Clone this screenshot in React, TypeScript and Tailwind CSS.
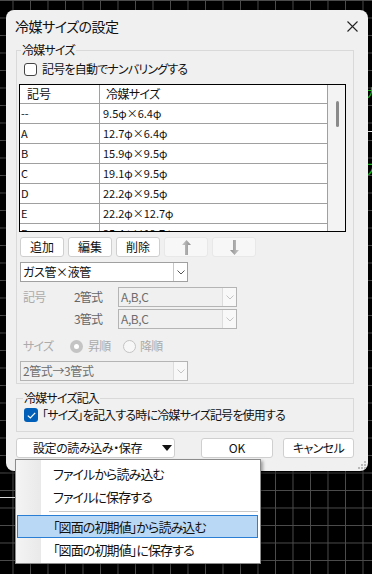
import type { ReactNode } from "react";

const FONT = "font-['Noto_Sans_CJK_JP',sans-serif] [font-feature-settings:'palt']";

const rows: [string, string][] = [
  ["--", "9.5φ×6.4φ"],
  ["A", "12.7φ×6.4φ"],
  ["B", "15.9φ×9.5φ"],
  ["C", "19.1φ×9.5φ"],
  ["D", "22.2φ×9.5φ"],
  ["E", "22.2φ×12.7φ"],
  ["F", "25.4φ×12.7φ"],
];

function Chevron({ color }: { color: string }) {
  return (
    <svg width="8" height="5" viewBox="0 0 8 5">
      <polyline points="0.5,0.5 4,4 7.5,0.5" fill="none" stroke={color} strokeWidth="1" />
    </svg>
  );
}

function Combo({
  label,
  disabled,
  className,
}: {
  label: string;
  disabled?: boolean;
  className: string;
}) {
  return (
    <div
      className={
        "flex h-[20px] border " +
        (disabled ? "border-[#b4b4b4] bg-[#f0f0f0] text-[#6d6d6d] " : "border-[#a0a0a0] bg-white text-[#111] ") +
        className
      }
    >
      <div className="flex flex-1 items-center pl-[2px] text-[12px] leading-none tracking-[-0.4px]">{label}</div>
      <div
        className={
          "flex w-[14px] items-center justify-center border-l " +
          (disabled ? "border-[#dcdcdc] bg-[#f8f8f8]" : "border-[#c8c8c8] bg-white")
        }
      >
        <Chevron color={disabled ? "#c4c4c4" : "#555"} />
      </div>
    </div>
  );
}

function Button({
  children,
  disabled,
  className,
}: {
  children: ReactNode;
  disabled?: boolean;
  className: string;
}) {
  return (
    <button
      type="button"
      className={
        "flex h-[20px] items-center justify-center rounded-[3px] border text-[12px] leading-none " +
        (disabled ? "border-[#e8e8e8] bg-[#f7f7f7]" : "border-[#cfcfcf] bg-white text-[#111]") +
        " " +
        className
      }
    >
      {children}
    </button>
  );
}

function Arrow({ down }: { down?: boolean }) {
  return (
    <svg width="9" height="15" viewBox="0 0 9 15" className={down ? "rotate-180" : ""}>
      <defs>
        <linearGradient id={down ? "ad" : "au"} x1="0" x2="1">
          <stop offset="0" stopColor="#c8c8c8" />
          <stop offset="1" stopColor="#8e8e8e" />
        </linearGradient>
      </defs>
      <path d="M4.5 0 L9 5 L6 5 L6 15 L3 15 L3 5 L0 5 Z" fill={`url(#${down ? "ad" : "au"})`} />
    </svg>
  );
}

export default function App() {
  return (
    <div
      className={
        "relative h-[574px] w-[372px] overflow-hidden bg-black bg-[linear-gradient(to_right,#4c4c4c_1px,transparent_1px),linear-gradient(to_bottom,#4c4c4c_1px,transparent_1px)] bg-[size:17.5px_17.5px] bg-[position:12.5px_0px] pl-[6px] pt-[10px] " +
        FONT
      }
    >
      {/* CAD drawing fragments peeking out on the right */}
      <span className="absolute left-[366px] top-[85px] text-[13px] leading-none text-[#1fd01f]">ガ</span>
      <span className="absolute left-[366px] top-[158px] text-[17px] leading-none text-[#1fd01f]">ガ</span>
      <div className="absolute left-[368px] top-[131px] h-[1px] w-[4px] bg-white" />
      <div className="absolute left-0 top-[497px] h-[1px] w-[15px] bg-[#d8d8d8]" />

      <div className="relative flex w-[362px] flex-col rounded-[8px] bg-[#f0f0f0] pb-[13px] shadow-[0_2px_6px_rgba(0,0,0,0.5)]">
        <div className="flex h-[32px] items-center justify-between pl-[9px] pr-[10px]">
          <span className="text-[14px] tracking-[-0.5px] text-[#111]">冷媒サイズの設定</span>
          <svg width="11" height="11" viewBox="0 0 11 11">
            <path d="M0.5 0.5 L10.5 10.5 M10.5 0.5 L0.5 10.5" stroke="#222" strokeWidth="1.1" />
          </svg>
        </div>

        <fieldset className="ml-[10px] w-[338px] border border-[#d9d9d9] pb-[2px] pl-[2px] tracking-[-0.8px]">
          <legend className="ml-[2px] px-[1px] text-[12px] leading-[16px] text-[#111]">冷媒サイズ</legend>

          <div className="mt-[3px] ml-[5px] flex h-[16px] items-center gap-[5px]">
            <div className="h-[13px] w-[13px] rounded-[3px] border border-[#444] bg-white" />
            <span className="text-[12px] leading-none text-[#111]">記号を自動でナンバリングする</span>
          </div>

          <div className="mt-[7px] flex h-[148px] w-[327px] overflow-hidden border border-black bg-white tracking-normal">
            <div className="flex-1 overflow-hidden text-[11px] leading-none text-[#111]">
              <div className="flex h-[19px] border-b border-r border-[#a0a0a0]">
                <div className="flex w-[80px] items-center border-r border-[#a0a0a0] pl-[7px] text-[12px]">記号</div>
                <div className="flex items-center pl-[6px] text-[12px] tracking-[-0.6px]">冷媒サイズ</div>
              </div>
              {rows.map(([code, size]) => (
                <div key={code} className="flex h-[20px] shrink-0 border-b border-r border-[#a0a0a0]">
                  <div className="flex w-[80px] items-center border-r border-[#a0a0a0] pl-[1px]">{code}</div>
                  <div className="flex items-center pl-[3px]">{size}</div>
                </div>
              ))}
            </div>
            <div className="w-[17px] bg-[#f3f3f3] pt-[16px]">
              <div className="ml-[8px] h-[26px] w-[3px] rounded-full bg-[#8a8a8a]" />
            </div>
          </div>

          <div className="mt-[5px] ml-[1px] flex gap-[4px] tracking-normal">
            <Button className="w-[44px]">追加</Button>
            <Button className="w-[44px]">編集</Button>
            <Button className="w-[44px]">削除</Button>
            <Button disabled className="w-[44px]">
              <Arrow />
            </Button>
            <Button disabled className="w-[44px]">
              <Arrow down />
            </Button>
          </div>

          <Combo label="ガス管×液管" className="mt-[5px] ml-[1px] w-[168px]" />

          <div className="mt-[5px] flex h-[20px] items-center text-[12px] leading-none">
            <span className="w-[55px] pl-[4px] text-[#ababab]">記号</span>
            <span className="w-[44px] text-[#666]">2管式</span>
            <Combo disabled label="A,B,C" className="w-[119px]" />
          </div>
          <div className="mt-[2px] flex h-[20px] items-center text-[12px] leading-none">
            <span className="w-[55px]" />
            <span className="w-[44px] text-[#666]">3管式</span>
            <Combo disabled label="A,B,C" className="w-[119px]" />
          </div>

          <div className="mt-[9px] flex h-[16px] items-center text-[12px] leading-none text-[#ababab]">
            <span className="w-[51px] pl-[4px]">サイズ</span>
            <span className="flex h-[13px] w-[13px] items-center justify-center rounded-full bg-[#c4c4c4]">
              <span className="h-[5px] w-[5px] rounded-full bg-white" />
            </span>
            <span className="ml-[5px] w-[35px]">昇順</span>
            <span className="h-[13px] w-[13px] rounded-full border border-[#c4c4c4] bg-[#f7f7f7]" />
            <span className="ml-[4px]">降順</span>
          </div>

          <Combo disabled label="2管式→3管式" className="mt-[7px] ml-[1px] w-[168px]" />
        </fieldset>

        <fieldset className="mt-[6px] ml-[10px] w-[338px] border border-[#d9d9d9] pb-[8px] pl-[2px] tracking-[-0.8px]">
          <legend className="ml-[4px] px-[1px] text-[12px] leading-[16px] text-[#111]">冷媒サイズ記入</legend>
          <div className="mt-[1px] ml-[5px] flex h-[16px] items-center gap-[4px]">
            <div className="flex h-[14px] w-[14px] items-center justify-center rounded-[3px] bg-[#005fb8]">
              <svg width="9" height="7" viewBox="0 0 9 7">
                <polyline points="0.8,3.6 3.3,6 8.2,0.8" fill="none" stroke="white" strokeWidth="1.2" />
              </svg>
            </div>
            <span className="text-[12px] leading-none text-[#111]">「サイズ」を記入する時に冷媒サイズ記号を使用する</span>
          </div>
        </fieldset>

        <div className="mt-[6px] flex h-[20px] pl-[10px]">
          <button
            type="button"
            className="relative flex h-[20px] w-[159px] items-center rounded-[3px] border border-[#cfcfcf] bg-white pl-[16px] text-[12px] leading-none tracking-[-0.4px] text-[#111]"
          >
            設定の読み込み・保存
            <svg width="10" height="6" viewBox="0 0 10 6" className="ml-auto mr-[2px]">
              <path d="M0 0 L10 0 L5 6 Z" fill="#111" />
            </svg>
          </button>
          <Button className="ml-[26px] w-[72px]">OK</Button>
          <Button className="ml-[10px] w-[71px] tracking-[-0.6px]">キャンセル</Button>
        </div>

        <svg width="8" height="8" viewBox="0 0 8 8" className="absolute bottom-[2px] right-[2px]">
          <rect x="6" y="0" width="2" height="2" fill="#b8b8b8" />
          <rect x="3" y="3" width="2" height="2" fill="#b8b8b8" />
          <rect x="6" y="3" width="2" height="2" fill="#b8b8b8" />
          <rect x="0" y="6" width="2" height="2" fill="#b8b8b8" />
          <rect x="3" y="6" width="2" height="2" fill="#b8b8b8" />
          <rect x="6" y="6" width="2" height="2" fill="#b8b8b8" />
        </svg>
      </div>

      {/* open dropdown menu */}
      <div className="absolute left-[15px] top-[459px] w-[246px] border border-[#8c8c8c] bg-white py-[2px] pr-[2px] pl-[1px] text-[13px] leading-none tracking-[-0.9px] text-[#111] shadow-[2px_2px_3px_rgba(0,0,0,0.35)]">
        <div className="absolute bottom-0 left-0 top-0 w-[25px] bg-[linear-gradient(to_right,#f4f4f4,#e9e9e9)]" />
        <div className="relative flex h-[23px] items-center pl-[36px]">ファイルから読み込む</div>
        <div className="relative flex h-[23px] items-center pl-[36px]">ファイルに保存する</div>
        <div className="relative flex h-[7px] items-center pl-[32px]">
          <div className="h-[1px] w-full bg-[#c8c8c8]" />
        </div>
        <div className="relative flex h-[23px] items-center border border-[#2a7fd4] bg-[#b9d8f5] pl-[35px]">
          「図面の初期値」から読み込む
        </div>
        <div className="relative flex h-[23px] items-center pl-[36px]">「図面の初期値」に保存する</div>
      </div>
    </div>
  );
}
